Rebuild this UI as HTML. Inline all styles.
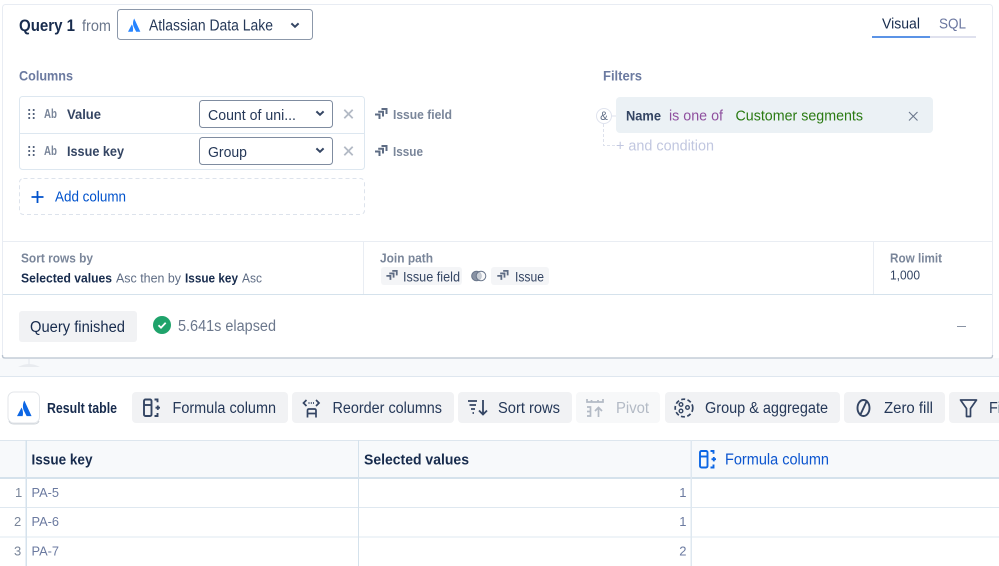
<!DOCTYPE html>
<html><head><meta charset="utf-8">
<style>
html,body{margin:0;padding:0;background:#fff;width:999px;height:566px;overflow:hidden}
svg{display:block;position:absolute;left:0;top:0;filter:blur(.35px)}
text{font-family:"Liberation Sans",sans-serif;font-size:13px;white-space:pre}
.b{font-weight:700}
</style></head><body>
<svg width="999" height="566" viewBox="0 0 999 566" xmlns="http://www.w3.org/2000/svg">
<defs>
<g id="logo"><path d="M4.1 6.2 L0 14 H5 C5.7 11.6 5.400 8.600 4.100 6.200Z"/><path d="M6.500 0 C5 3 4.800 6.700 6.400 9.600 L8.600 14 H13 L7 1 Z"/></g>
<g id="stk" fill="none" stroke="#5e6c84" stroke-width="2"><path d="M0 7.500 H4.500 V12"/><path d="M3.200 4.800 H8 V9.500"/><path d="M6.500 2 H11.500 V7"/></g>
<g id="form" fill="none" stroke-width="1.900"><rect x="1" y="1" width="7.500" height="16.500" rx="1.500"/><path d="M1 6.500 H8.500"/><path d="M11.500 1 H14.500 V3.800 M14.500 14.500 V17.500 H11.500 M12.500 9.200 H17 M14.800 7 V11.400"/></g>
<g id="chev"><path d="M-3.600 -1.600 L0 1.800 L3.600 -1.600" fill="none" stroke="#344563" stroke-width="2"/></g>
<g id="xm"><path d="M-4.200 -4.200 L4.200 4.200 M4.200 -4.200 L-4.200 4.200" fill="none" stroke="#b3bac5" stroke-width="1.800"/></g>
<g id="dots" fill="#42526e"><circle cx="0" cy="0" r="1.050"/><circle cx="4.500" cy="0" r="1.050"/><circle cx="0" cy="4" r="1.050"/><circle cx="4.500" cy="4" r="1.050"/><circle cx="0" cy="8" r="1.050"/><circle cx="4.500" cy="8" r="1.050"/></g>
</defs>

<!-- query card -->
<rect x="0" y="358" width="999" height="18" fill="#f7f9fb"/>
<rect x="0" y="376" width="999" height="1" fill="#dfe7ef"/>
<rect x="2.500" y="4.500" width="990" height="353.500" rx="3" fill="#fff" stroke="#e8ecf3"/>
<path d="M2.500 355 V356 Q2.500 358 5 358 H990 Q992.500 358 992.500 356 V355" fill="none" stroke="#b9c3cf" stroke-width="1.300"/>
<path d="M29 359 V365" stroke="#e3e7ec" stroke-width="1"/>
<path d="M18 367 Q29 361 40 367Z" fill="#e8ebef"/>

<text x="19" y="31" class="b" textLength="56" lengthAdjust="spacingAndGlyphs" fill="#172b4d" style="font-size:17px">Query 1</text>
<text x="82" y="31" textLength="29" lengthAdjust="spacingAndGlyphs" fill="#6b778c" style="font-size:15.500px">from</text>
<rect x="117.500" y="9.500" width="195" height="30" rx="3" fill="#fff" stroke="#8c98aa"/>
<use href="#logo" fill="#2684ff" transform="translate(128 18.500) scale(.95)"/>
<text x="149" y="30.500" textLength="124" lengthAdjust="spacingAndGlyphs" fill="#253858" style="font-size:15.500px">Atlassian Data Lake</text>
<use href="#chev" x="295" y="25"/>

<text x="882" y="28.500" textLength="38" lengthAdjust="spacingAndGlyphs" fill="#172b4d" style="font-size:15px">Visual</text>
<text x="939" y="28.500" textLength="27" lengthAdjust="spacingAndGlyphs" fill="#6b77a0" style="font-size:15px">SQL</text>
<rect x="930" y="36" width="46" height="2" fill="#dfe1ee"/>
<rect x="872" y="36" width="58" height="2" fill="#5b93e6"/>

<text x="19" y="80.500" class="b" textLength="54" lengthAdjust="spacingAndGlyphs" fill="#6b7aa0" style="font-size:14px">Columns</text>
<text x="603" y="80.500" class="b" textLength="39" lengthAdjust="spacingAndGlyphs" fill="#6b7aa0" style="font-size:14px">Filters</text>

<!-- columns -->
<rect x="19.500" y="96.500" width="345" height="73" rx="3" fill="#fff" stroke="#dde7f0"/>
<path d="M19 133.500 H365" stroke="#dde7f0"/>
<use href="#dots" x="29.200" y="110"/><use href="#dots" x="29.200" y="147"/>
<text x="44" y="118" textLength="13" lengthAdjust="spacingAndGlyphs" fill="#7a869a" style="font-size:13px;font-weight:700">Ab</text>
<text x="44" y="155" textLength="13" lengthAdjust="spacingAndGlyphs" fill="#7a869a" style="font-size:13px;font-weight:700">Ab</text>
<text x="67" y="119" class="b" textLength="34" lengthAdjust="spacingAndGlyphs" fill="#344563" style="font-size:14px">Value</text>
<text x="67" y="156" class="b" textLength="57" lengthAdjust="spacingAndGlyphs" fill="#344563" style="font-size:14px">Issue key</text>
<rect x="199.500" y="100.500" width="133" height="27" rx="3" fill="#fff" stroke="#7f8ca0"/>
<rect x="199.500" y="137.500" width="133" height="27" rx="3" fill="#fff" stroke="#7f8ca0"/>
<text x="208" y="120" textLength="88" lengthAdjust="spacingAndGlyphs" fill="#253858" style="font-size:15px">Count of uni...</text>
<text x="208" y="157" textLength="39" lengthAdjust="spacingAndGlyphs" fill="#253858" style="font-size:15px">Group</text>
<use href="#chev" x="320" y="113"/><use href="#chev" x="320" y="150"/>
<use href="#xm" x="348.500" y="114"/><use href="#xm" x="348.500" y="151"/>
<use href="#stk" x="375" y="107"/><use href="#stk" x="375" y="144"/>
<text x="393" y="119" class="b" textLength="59" lengthAdjust="spacingAndGlyphs" fill="#7a869a" style="font-size:13px">Issue field</text>
<text x="393" y="156" class="b" textLength="30" lengthAdjust="spacingAndGlyphs" fill="#7a869a" style="font-size:13px">Issue</text>
<rect x="19.500" y="178.500" width="345" height="36" rx="4" fill="#fff" stroke="#dde3ec" stroke-dasharray="4 3"/>
<path d="M37.500 191 V203 M31.500 197 H43.500" stroke="#0052cc" stroke-width="1.800"/>
<text x="55" y="201.500" textLength="71" lengthAdjust="spacingAndGlyphs" fill="#0052cc" style="font-size:14.500px">Add column</text>

<!-- filters -->
<path d="M603.500 124 V145.500 H616" fill="none" stroke="#dde1ec" stroke-dasharray="3 2"/>
<path d="M611 116 H616" stroke="#dde1ec"/>
<circle cx="604" cy="116" r="7.500" fill="#fff" stroke="#dfe3ee"/>
<text x="604" y="120" text-anchor="middle" fill="#5e6c84" style="font-size:11.500px">&amp;</text>
<rect x="616" y="97" width="317" height="36" rx="4" fill="#ebf1f5"/>
<text x="626" y="120.500" class="b" textLength="35" lengthAdjust="spacingAndGlyphs" fill="#344563" style="font-size:14px">Name</text>
<text x="669" y="120.500" textLength="54" lengthAdjust="spacingAndGlyphs" fill="#8e4f9e" style="font-size:15px">is one of</text>
<text x="735.500" y="120.500" textLength="127.500" lengthAdjust="spacingAndGlyphs" fill="#2a7a12" style="font-size:15px">Customer segments</text>
<path d="M909 112 L917.500 120.500 M917.500 112 L909 120.500" stroke="#6b778c" stroke-width="1.100"/>
<text x="616" y="150.500" textLength="98" lengthAdjust="spacingAndGlyphs" fill="#c1c7e0" style="font-size:15px">+ and condition</text>

<!-- summary row -->
<path d="M3 241.500 H992" stroke="#e9edf3"/>
<path d="M3 294.500 H992" stroke="#d5e2ec"/>
<path d="M363.500 242 V294 M873.500 242 V294" stroke="#e9edf3"/>
<text x="21" y="262.500" textLength="72" lengthAdjust="spacingAndGlyphs" class="b" fill="#7a869a" style="font-size:13px">Sort rows by</text>
<text x="21" y="282.500" textLength="91" lengthAdjust="spacingAndGlyphs" class="b" fill="#172b4d" style="font-size:13px">Selected values</text>
<text x="116" y="282.500" textLength="65" lengthAdjust="spacingAndGlyphs" fill="#5e6c84" style="font-size:13px">Asc then by</text>
<text x="185" y="282.500" textLength="53" lengthAdjust="spacingAndGlyphs" class="b" fill="#172b4d" style="font-size:13px">Issue key</text>
<text x="242" y="282.500" textLength="20" lengthAdjust="spacingAndGlyphs" fill="#5e6c84" style="font-size:13px">Asc</text>
<text x="380" y="262.500" textLength="53" lengthAdjust="spacingAndGlyphs" class="b" fill="#7a869a" style="font-size:13px">Join path</text>
<rect x="381" y="267" width="81" height="18" rx="3" fill="#f4f5f7"/>
<rect x="491" y="267" width="58" height="18" rx="3" fill="#f4f5f7"/>
<use href="#stk" x="386" y="269" transform="translate(39 27) scale(.9)"/>
<use href="#stk" x="497" y="269" transform="translate(50 27) scale(.9)"/>
<text x="403" y="281.500" textLength="57" lengthAdjust="spacingAndGlyphs" fill="#344563" style="font-size:13.500px">Issue field</text>
<text x="515" y="281.500" textLength="29" lengthAdjust="spacingAndGlyphs" fill="#344563" style="font-size:13.500px">Issue</text>
<circle cx="476.500" cy="276" r="4.800" fill="#8993a4" stroke="#6b778c"/><circle cx="481" cy="276" r="4.800" fill="#f4f5f7" fill-opacity=".6" stroke="#6b778c"/>
<text x="890" y="262.500" textLength="52" lengthAdjust="spacingAndGlyphs" class="b" fill="#7a869a" style="font-size:13px">Row limit</text>
<text x="890" y="279.500" textLength="30" lengthAdjust="spacingAndGlyphs" fill="#344563" style="font-size:13px">1,000</text>

<!-- status -->
<rect x="19" y="311" width="118" height="31" rx="3" fill="#f1f2f4"/>
<text x="30" y="332" textLength="95" lengthAdjust="spacingAndGlyphs" fill="#172b4d" style="font-size:15.500px">Query finished</text>
<circle cx="162" cy="325" r="9" fill="#1fa36b"/>
<path d="M158.500 325.200 L161 327.700 L165.700 322.800" fill="none" stroke="#fff" stroke-width="1.800"/>
<text x="178" y="331" textLength="98" lengthAdjust="spacingAndGlyphs" fill="#6b778c" style="font-size:15.500px">5.641s elapsed</text>
<path d="M957 326.500 H966" stroke="#8993a4" stroke-width="1"/>

<!-- toolbar -->
<rect x="8" y="392" width="31.500" height="31" rx="6" fill="#fff" stroke="#e3e6ea"/>
<path d="M9 421 Q10 424 14 424 H34 Q38 424 39 421" fill="none" stroke="#cfd4da"/>
<use href="#logo" transform="translate(17 400.500) scale(1.120)" fill="#0c66e4"/>
<text x="47" y="413" class="b" textLength="70" lengthAdjust="spacingAndGlyphs" fill="#172b4d" style="font-size:14.500px">Result table</text>

<rect x="132" y="392" width="156" height="31" rx="4" fill="#f1f2f4"/>
<rect x="292" y="392" width="162" height="31" rx="4" fill="#f1f2f4"/>
<rect x="458" y="392" width="114" height="31" rx="4" fill="#f1f2f4"/>
<rect x="576" y="392" width="84" height="31" rx="4" fill="#f7f8f9"/>
<rect x="665" y="392" width="175" height="31" rx="4" fill="#f1f2f4"/>
<rect x="844" y="392" width="101" height="31" rx="4" fill="#f1f2f4"/>
<rect x="949" y="392" width="60" height="31" rx="4" fill="#f1f2f4"/>

<use href="#form" x="143" y="398.500" stroke="#344563"/>
<text x="172.500" y="413" textLength="103.500" lengthAdjust="spacingAndGlyphs" fill="#253858" style="font-size:15.500px">Formula column</text>
<g fill="none" stroke="#344563" stroke-width="1.700">
<path d="M306.500 400 L303.500 403 L306.500 406 M316 400 L319 403 L316 406"/>
<path d="M308.500 403 H309.500 M310.800 403 H311.800 M313 403 H314"/>
<path d="M307.500 417.500 V410.500 Q307.500 409 309 409 H314.500 Q316 409 316 410.500 V417.500 M307.500 413.500 H316"/>
</g>
<text x="332.500" y="413" textLength="109.500" lengthAdjust="spacingAndGlyphs" fill="#253858" style="font-size:15.500px">Reorder columns</text>
<g fill="none" stroke="#344563" stroke-width="1.800">
<path d="M468 401 H477 M469.500 405 H476 M471 409 H475 M472.500 413 H474"/>
<path d="M483 400 V414 M479 410.500 L483 414.500 L487 410.500"/>
</g>
<text x="498" y="413" textLength="62" lengthAdjust="spacingAndGlyphs" fill="#253858" style="font-size:15.500px">Sort rows</text>
<g fill="none" stroke="#b3bac5" stroke-width="1.700">
<path d="M587 399 V402 H603 V399 M591.500 400 V402 M598 400 V402"/>
<path d="M587 407 H590.500 V416 H587 M587 411.500 H590"/>
<path d="M598.500 417 V408 M595 411 L598.500 407.500 L602 411"/>
</g>
<text x="616" y="413" textLength="33" lengthAdjust="spacingAndGlyphs" fill="#b3bac5" style="font-size:15.500px">Pivot</text>
<g fill="none" stroke="#344563" stroke-width="1.700">
<circle cx="684" cy="408" r="8.800" stroke-dasharray="4 2.400"/>
<circle cx="681" cy="404.500" r="1.800" stroke-width="1.400"/><circle cx="681" cy="411" r="1.800" stroke-width="1.400"/><circle cx="687.500" cy="407.500" r="1.800" stroke-width="1.400"/>
</g>
<text x="705" y="413" textLength="123" lengthAdjust="spacingAndGlyphs" fill="#253858" style="font-size:15.500px">Group &amp; aggregate</text>
<g fill="none" stroke="#344563" stroke-width="1.900"><ellipse cx="863.500" cy="408" rx="6" ry="8"/><path d="M860 415.500 L867 400.500"/></g>
<text x="884" y="413" textLength="49" lengthAdjust="spacingAndGlyphs" fill="#253858" style="font-size:15.500px">Zero fill</text>
<path d="M960.500 400 H976.500 L970.500 408.500 V416.500 L966.500 416.500 V408.500 Z" fill="none" stroke="#344563" stroke-width="1.700" stroke-linejoin="round"/>
<text x="989" y="413" textLength="32" lengthAdjust="spacingAndGlyphs" fill="#253858" style="font-size:15.500px">Filter</text>

<!-- table -->
<rect x="0" y="440" width="999" height="38" fill="#f7f9fb"/>
<path d="M0 440.500 H999" stroke="#dde6ee"/>
<rect x="0" y="477" width="999" height="2" fill="#d5e2ec"/>
<path d="M0 507.500 H999 M0 537 H999" stroke="#dfe8f0" stroke-width="1"/>
<rect x="25.500" y="440" width="1.500" height="126" fill="#d5e2ec"/>
<rect x="358" y="440" width="1" height="126" fill="#d5e2ec"/>
<rect x="690.500" y="440" width="1.500" height="126" fill="#dfe8f0"/>
<text x="31.500" y="464.500" class="b" textLength="61" lengthAdjust="spacingAndGlyphs" fill="#172b4d" style="font-size:15px">Issue key</text>
<text x="364" y="464.500" class="b" textLength="105" lengthAdjust="spacingAndGlyphs" fill="#172b4d" style="font-size:15px">Selected values</text>
<use href="#form" x="699" y="450" stroke="#0c66e4"/>
<text x="725" y="464.500" textLength="104" lengthAdjust="spacingAndGlyphs" fill="#0c55cf" style="font-size:15.500px">Formula column</text>
<g fill="#7a869a">
<text x="15" y="497" style="font-size:13px">1</text><text x="14" y="526" style="font-size:13px">2</text><text x="14" y="555.500" style="font-size:13px">3</text>
</g>
<g fill="#6b7aa0">
<text x="31.500" y="497" textLength="27.500" lengthAdjust="spacingAndGlyphs" style="font-size:13px">PA-5</text>
<text x="31.500" y="526" textLength="27.500" lengthAdjust="spacingAndGlyphs" style="font-size:13px">PA-6</text>
<text x="31.500" y="555.500" textLength="27.500" lengthAdjust="spacingAndGlyphs" style="font-size:13px">PA-7</text>
<text x="686.500" y="497" text-anchor="end" style="font-size:13px">1</text>
<text x="686.500" y="526" text-anchor="end" style="font-size:13px">1</text>
<text x="686.500" y="555.500" text-anchor="end" style="font-size:13px">2</text>
</g>
</svg>
</body></html>
